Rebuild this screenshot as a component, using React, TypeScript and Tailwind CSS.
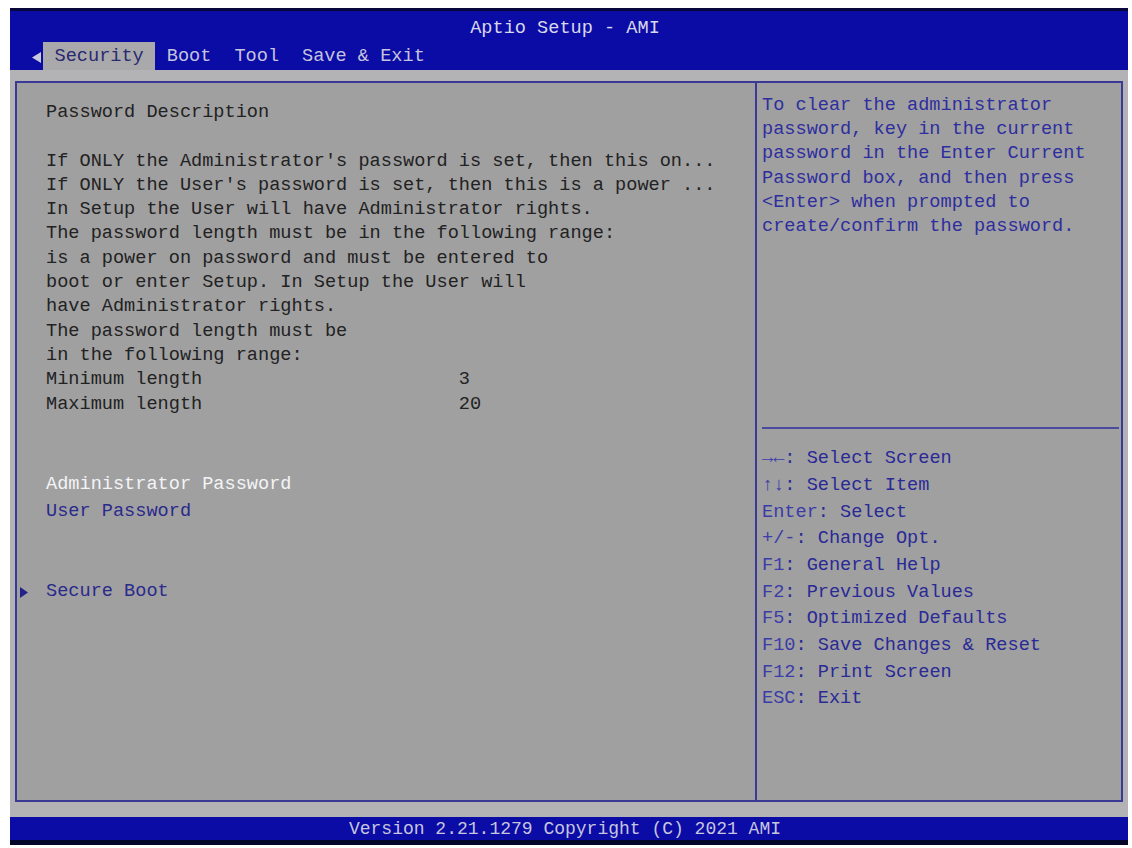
import React from "react";

const desc = [
  "Password Description",
  "",
  "If ONLY the Administrator's password is set, then this on...",
  "If ONLY the User's password is set, then this is a power ...",
  "In Setup the User will have Administrator rights.",
  "The password length must be in the following range:",
  "is a power on password and must be entered to",
  "boot or enter Setup. In Setup the User will",
  "have Administrator rights.",
  "The password length must be",
  "in the following range:",
  "Minimum length                       3",
  "Maximum length                       20",
];

const helpText = [
  "To clear the administrator",
  "password, key in the current",
  "password in the Enter Current",
  "Password box, and then press",
  "<Enter> when prompted to",
  "create/confirm the password.",
];

const keys: [string, string][] = [
  ["→←", ": Select Screen"],
  ["↑↓", ": Select Item"],
  ["Enter", ": Select"],
  ["+/-", ": Change Opt."],
  ["F1", ": General Help"],
  ["F2", ": Previous Values"],
  ["F5", ": Optimized Defaults"],
  ["F10", ": Save Changes & Reset"],
  ["F12", ": Print Screen"],
  ["ESC", ": Exit"],
];

const tabs = ["Security", "Boot", "Tool", "Save & Exit"];

const App = () => {
  return (
    <div className="w-[1132px] h-[848px] bg-white pt-[8px] pl-[10px] pr-[4px] pb-[3px] font-['Liberation_Mono','DejaVu_Sans_Mono',monospace] text-[18.6px] leading-[24.3px] whitespace-pre">
      <div className="h-full flex flex-col bg-[#b3b3b5]">
        {/* title bar + tabs */}
        <div className="h-[62px] bg-[#0b0ba6] border-t-[3px] border-[#07073c] flex flex-col">
          <div className="h-[31px] pt-[6px] pr-[8px] text-center text-[#d8d8ec]">
            Aptio Setup - AMI
          </div>
          <div className="h-[28px] flex">
            <div className="w-[33px] flex items-center justify-end pr-[2px] pt-[3px]">
              <svg width="9" height="11" viewBox="0 0 9 11">
                <polygon points="9,0 9,11 0,5.5" fill="#c9c9dc" />
              </svg>
            </div>
            {tabs.map((t, i) => (
              <div
                key={t}
                className={
                  i === 0
                    ? "px-[11.5px] pt-[3px] flex items-center bg-[#a9a9ab] text-[#2a2a70]"
                    : "px-[11.5px] pt-[3px] flex items-center text-[#c4c4dc]"
                }
              >
                {t}
              </div>
            ))}
          </div>
        </div>

        <div className="h-[11px]" />

        {/* panels */}
        <div className="h-[721px] ml-[5px] mr-[5px] flex border-2 border-[#3a3a96] bg-[#a0a0a1]">
          <div className="w-[740px] border-r-2 border-[#3a3a96] pt-[18px] text-[#222222]">
            {desc.map((l, i) => (
              <div key={i} className="pl-[29px] h-[24.3px]">
                {l}
              </div>
            ))}
            <div className="h-[55.5px]" />
            <div className="pl-[29px] h-[26.7px] leading-[26.7px] text-[#f4f4f6]">Administrator Password</div>
            <div className="pl-[29px] h-[26.7px] leading-[26.7px] text-[#2a2a8c]">User Password</div>
            <div className="h-[53.4px]" />
            <div className="flex items-center h-[26.7px] leading-[26.7px] text-[#2a2a8c]">
              <span className="w-[29px] pl-[3px] flex items-center">
                <svg width="8" height="11" viewBox="0 0 8 11">
                  <polygon points="0,0 8,5.5 0,11" fill="#22228a" />
                </svg>
              </span>
              <span>Secure Boot</span>
            </div>
          </div>

          <div className="flex-1 pt-[11px] text-[#2e2e9e]">
            {helpText.map((l, i) => (
              <div key={i} className="pl-[5px] h-[24.2px] leading-[24.2px]">
                {l}
              </div>
            ))}
            <div className="mt-[188px] ml-[5px] mr-[2px] h-[2px] bg-[#4a4aa0]" />
            <div className="mt-[17px]">
              {keys.map(([k, v]) => (
                <div key={k} className="pl-[5px] h-[26.7px] leading-[26.7px]">
                  <span className="text-[#3c3ca8]">{k}</span>
                  <span className="text-[#2a2a96]">{v}</span>
                </div>
              ))}
            </div>
          </div>
        </div>

        <div className="h-[15px]" />

        {/* footer */}
        <div className="h-[28px] bg-[#0b0ba6] border-b-[5px] border-[#05052a] pt-[1px] pr-[8px] text-center text-[18px] leading-[22px] text-[#c6c6de]">
          Version 2.21.1279 Copyright (C) 2021 AMI
        </div>
      </div>
    </div>
  );
};

export default App;
